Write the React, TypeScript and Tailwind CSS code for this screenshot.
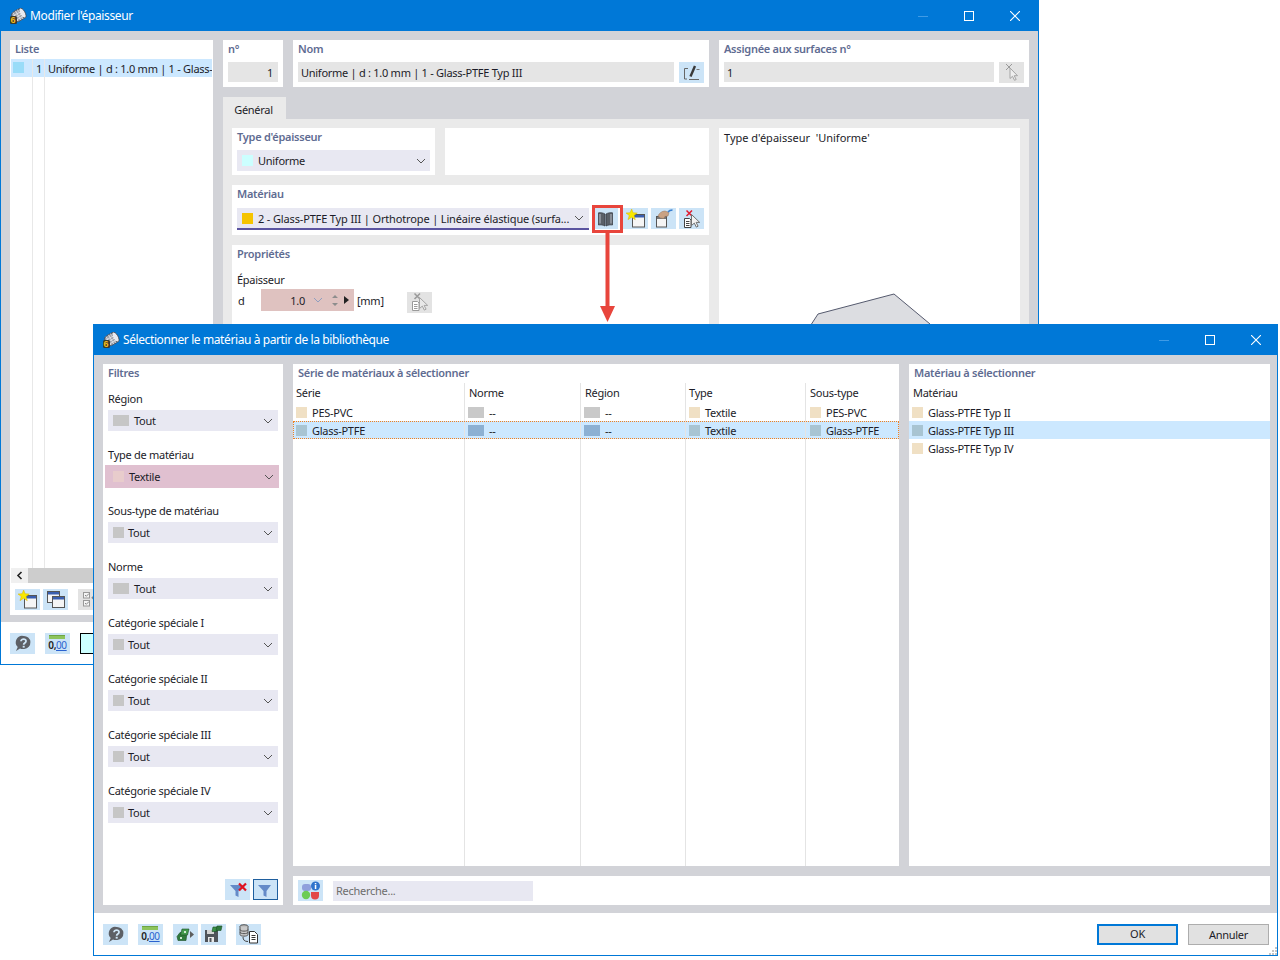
import React from "react";

const Chevron = ({ c = "#555" }: { c?: string }) => (
  <svg width="10" height="6" viewBox="0 0 10 6" className="shrink-0"><path d="M1 1l4 4 4-4" fill="none" stroke={c} strokeWidth="1" /></svg>
);

const AppIcon = () => (
  <svg width="18" height="16" viewBox="0 0 18 16" className="shrink-0">
    <g transform="rotate(-30 10 7)">
      <rect x="3" y="1.500" width="13" height="11" rx="4" fill="#9da2ac" stroke="#3d4048" strokeWidth="0.7" />
      <ellipse cx="14" cy="7" rx="2.600" ry="5.500" fill="#e8eaf0" stroke="#3d4048" strokeWidth="0.7" />
      <path d="M6 2v10M9 1.500v11M11.500 1.500v11M3 5h10M3 7.500h10M3 10h10" stroke="#f2f3f6" strokeWidth="0.6" />
    </g>
    <rect x="1" y="8" width="7" height="8" rx="1.500" fill="#3d3a2a" />
    <text x="1.500" y="15.300" fontSize="9" fontWeight="700" fill="#f5bd1c" fontFamily="Liberation Sans">6</text>
  </svg>
);

const HelpIcon = () => (
  <svg width="17" height="17" viewBox="0 0 17 17">
    <path d="M9.500 1a6.500 6.500 0 0 1 .8 13c-1.600.3-3.200 0-4.300-.5L2 16l1.700-4A6.500 6.500 0 0 1 9.500 1z" fill="#5d6066" />
    <path d="M7 6.300c0-2.900 5.300-2.900 5 0 0 1.900-2.300 1.700-2.300 3.400" fill="none" stroke="#cfe6f7" strokeWidth="1.800" />
    <rect x="8.700" y="10.800" width="2" height="1.800" fill="#cfe6f7" />
  </svg>
);

const DecIcon = () => (
  <div className="flex flex-col items-center leading-none">
    <div className="w-[16px] h-[4px] mt-[1px] bg-[#8dc45c] border-t border-[#6ea544]" />
    <div className="text-[10px] font-semibold leading-[13px] tracking-[-0.4px] text-[#222]">0,<span className="text-[#2a62cf] underline font-normal">00</span></div>
  </div>
);

const WinShape = ({ x, y, w, h, bar = "#3a5fb0" }: { x: number; y: number; w: number; h: number; bar?: string }) => (
  <g>
    <rect x={x + 0.5} y={y + 0.5} width={w} height={h} fill="#f5f5f5" stroke="#555" />
    <rect x={x + 1} y={y + 1} width={w - 1} height={2.500} fill={bar} />
  </g>
);

const Star = ({ x, y }: { x: number; y: number }) => (
  <path transform={`translate(${x} ${y}) scale(1.25)`} d="M4.500 0l1.200 3 3.300.2-2.600 2 1 3.300-2.900-1.900L1.600 8.500l1-3.300L0 3.200 3.300 3z" fill="#f8e800" stroke="#d8b400" strokeWidth="0.4" />
);

const NewWinIcon = () => (
  <svg width="21" height="19" viewBox="0 0 21 19">
    <WinShape x={7} y={5} w={12} h={12.500} />
    <Star x={1} y={0} />
  </svg>
);

const CopyWinIcon = () => (
  <svg width="21" height="19" viewBox="0 0 21 19">
    <WinShape x={2} y={1} w={12} h={11} />
    <WinShape x={7} y={6} w={12} h={11} />
  </svg>
);

const BookIcon = () => (
  <svg width="17" height="16" viewBox="0 0 17 16">
    <path d="M8 3C6 1.800 3.500 1.500 1.500 1.800V14c2-.4 4.500 0 6.500 1z" fill="#5a6068" stroke="#30343c" strokeWidth="0.7" />
    <path d="M9 3c2-1.200 4.500-1.500 6.500-1.200V14c-2-.4-4.500 0-6.500 1z" fill="#5a6068" stroke="#30343c" strokeWidth="0.7" />
    <path d="M3 3v9.500M14 3v9.500" stroke="#b8bec9" strokeWidth="1" />
  </svg>
);

const BoxHandIcon = () => (
  <svg width="21" height="19" viewBox="0 0 21 19">
    <rect x="3.500" y="7.500" width="10" height="10.500" fill="#f5f5f5" stroke="#555" />
    <rect x="4" y="8" width="9" height="2" fill="#777" />
    <path d="M5 7c1-3 4-5 7-5l4 1.500-1 3.500-3 .5-1.500 2-3-.5z" fill="#c9a284" stroke="#94745c" strokeWidth="0.5" />
    <path d="M15 3c1-1.300 2.500-2 4.500-2" fill="none" stroke="#3a7fd0" strokeWidth="1.600" />
  </svg>
);

const CursorDocIcon = ({ muted = false }: { muted?: boolean }) => (
  <svg width="21" height="20" viewBox="0 0 21 20">
    <path d="M3.500 9.500h5l1.500 1.500v7.500H3.500z" fill="#fff" stroke={muted ? "#9a9a9a" : "#444"} />
    <path d="M5 12.500h3.500M5 14.500h3.500M5 16.500h3.500" stroke={muted ? "#9a9a9a" : "#444"} />
    <path d="M5.500 1.500l5.500 5.500M11 1.500L5.500 7" stroke={muted ? "#9a9a9a" : "#e01b2f"} strokeWidth="1.500" />
    <path d="M10.500 5.500v11l2.800-2.400 2 4 1.800-.9-2-3.800h3.600z" fill={muted ? "#e8e8e8" : "#f2f2f2"} stroke={muted ? "#a5a5a5" : "#707070"} />
  </svg>
);

const CursorXIcon = () => (
  <svg width="16" height="19" viewBox="0 0 16 19">
    <path d="M2 1l6 6M8 1L2 7" stroke="#9a9a9a" strokeWidth="1" />
    <path d="M6 5v10.500l2.500-2.200 2 4 1.700-.8-2-3.800H13.500z" fill="#efefef" stroke="#a5a5a5" />
  </svg>
);

const EditIcon = () => (
  <svg width="17" height="16" viewBox="0 0 17 16">
    <path d="M5 3.500H1.500v10.500H4M6 14.500h10" fill="none" stroke="#666" />
    <path d="M12 1L7.500 11.500" stroke="#3a3a3a" strokeWidth="2.400" />
    <path d="M13.500 4.500h3" stroke="#777" />
  </svg>
);

const CheckListIcon = () => (
  <svg width="15" height="19" viewBox="0 0 15 19">
    <rect x="0.500" y="2.500" width="6" height="5.500" fill="#f5f5f5" stroke="#999" />
    <rect x="0.500" y="10.500" width="6" height="5.500" fill="#f5f5f5" stroke="#999" />
    <path d="M2 5l1.300 1.300L6 3.500M2 13l1.300 1.300L6 11.500" fill="none" stroke="#888" />
    <path d="M9 7l3 3 3-3" fill="none" stroke="#888" strokeWidth="2" />
  </svg>
);

const FunnelIcon = ({ x = false }: { x?: boolean }) => (
  <svg width="20" height="16" viewBox="0 0 20 16">
    <path d="M2 3h13L10.500 9v6l-3-1.500V9z" fill="#648ac8" />
    {x && <path d="M11 1.500l7 7M18 1.500l-7 7" stroke="#e01020" strokeWidth="2.200" />}
  </svg>
);

const ColorInfoIcon = () => (
  <svg width="20" height="20" viewBox="0 0 20 20">
    <rect x="1" y="3" width="9" height="7" rx="3" fill="#8f9fdc" />
    <circle cx="5" cy="14" r="4.200" fill="#6dcc55" />
    <path d="M10 11h8v3.500a4 4 0 0 1-8 0z" fill="#e34848" />
    <circle cx="14.500" cy="5" r="4.500" fill="#2f74cc" />
    <rect x="13.800" y="4" width="1.500" height="4" fill="#fff" />
    <rect x="13.800" y="2" width="1.500" height="1.300" fill="#fff" />
  </svg>
);

const GreenArrowIcon = () => (
  <svg width="19" height="15" viewBox="0 0 19 15">
    <path d="M1 9.500l3-4h7l-1 8H2z" fill="#2f7a3c" stroke="#1b4d25" strokeWidth="0.6" />
    <path d="M6 2h7l-1.500 6H4.500z" fill="#439a4e" stroke="#1b4d25" strokeWidth="0.6" />
    <path d="M4 10h2v2H4zM8 4h2v2H8z" fill="#cfe8d2" />
    <path d="M14 4l4 3.500-4 3.500z" fill="#5d5d5d" />
  </svg>
);

const SaveIcon = () => (
  <svg width="20" height="18" viewBox="0 0 20 18">
    <path d="M1 5h13v12H1z" fill="#50545a" />
    <rect x="3" y="5" width="7" height="4" fill="#d4d4d4" />
    <rect x="4" y="12" width="6" height="5" fill="#e8e8e8" />
    <rect x="5.500" y="13" width="2" height="4" fill="#50545a" />
    <path d="M9 2h5l-1 4.500H8z" fill="#3b9147" stroke="#1b4d25" strokeWidth="0.6" />
    <path d="M13 1h5l-1 4.500h-5z" fill="#2f7a3c" stroke="#1b4d25" strokeWidth="0.6" />
  </svg>
);

const DbDocIcon = () => (
  <svg width="21" height="20" viewBox="0 0 21 20">
    <ellipse cx="6" cy="2.500" rx="4" ry="1.800" fill="#b5b5b5" stroke="#555" />
    <path d="M2 2.500v8c0 2.200 8 2.200 8 0v-8M2 5.500c0 2.200 8 2.200 8 0M2 8c0 2.200 8 2.200 8 0" fill="#c9c9c9" stroke="#555" />
    <path d="M5 13c0 3 1.500 4.500 5 4.500" fill="none" stroke="#444" />
    <path d="M11.500 7.500h5l3 3v8.500h-8z" fill="#fff" stroke="#333" />
    <path d="M13.500 11.500h4M13.500 13.500h4M13.500 15.500h4" stroke="#333" />
  </svg>
);

const Btn = ({ children, muted = false, extra = "" }: { children?: React.ReactNode; muted?: boolean; extra?: string }) => (
  <div className={`w-[25px] h-[21px] shrink-0 flex items-center justify-center ${muted ? "bg-[#e3e3e3]" : "bg-[#cce4f7]"} ${extra}`}>{children}</div>
);

const Title = ({ children }: { children: React.ReactNode }) => (
  <div className="h-[19px] px-[5px] flex items-center font-semibold text-[#5f6c92] whitespace-nowrap">{children}</div>
);

const WindowControls = () => (
  <div className="ml-auto flex items-center gap-[36px]">
    <div className="w-[10px] h-px bg-[#3f9be6]" />
    <div className="w-[10px] h-[10px] border border-white" />
    <svg width="10" height="10" viewBox="0 0 10 10"><path d="M0 0l10 10M10 0L0 10" stroke="#fff" strokeWidth="1.100" /></svg>
  </div>
);

const Swatch = ({ c, wide = false }: { c: string; wide?: boolean }) => (
  <span className={`inline-block h-[11px] shrink-0 ${wide ? "w-[16px] mr-[5px]" : "w-[11px] mr-[4px]"}`} style={{ backgroundColor: c }} />
);

const filters: { label: string; value: string; wide?: boolean }[] = [
  { label: "Région", value: "Tout", wide: true },
  { label: "Type de matériau", value: "Textile" },
  { label: "Sous-type de matériau", value: "Tout" },
  { label: "Norme", value: "Tout", wide: true },
  { label: "Catégorie spéciale I", value: "Tout" },
  { label: "Catégorie spéciale II", value: "Tout" },
  { label: "Catégorie spéciale III", value: "Tout" },
  { label: "Catégorie spéciale IV", value: "Tout" },
];

const COLS = "grid grid-cols-[172px_116px_105px_120px_93px]";
const CELL = "border-r border-[#e4e4e4] pl-[3px] flex items-center";

const Cell = ({ c, text, wide, last }: { c: string; text: string; wide?: boolean; last?: boolean }) => (
  <div className={last ? "pl-[4px] flex items-center" : CELL}>
    <Swatch c={c} wide={wide} />
    <span className={`pt-[2px] ${wide ? "" : "pl-px"}`}>{text}</span>
  </div>
);

export default function App() {
  return (
    <div className="relative w-[1280px] h-[960px] bg-white overflow-hidden font-['Noto_Sans',sans-serif] text-[11px] tracking-[-0.27px] text-[#1c1c28]">
      {/* Window 1 */}
      <div className="absolute left-0 top-0 w-[1039px] h-[665px] border border-[#0078d7] flex flex-col overflow-hidden box-border">
        <div className="h-[30px] shrink-0 bg-[#0078d7] text-white text-[12px] tracking-[-0.38px] flex items-center pl-[8px] pr-[18px]">
          <AppIcon />
          <span className="ml-[3px]">Modifier l'épaisseur</span>
          <WindowControls />
        </div>
        <div className="h-[591px] shrink-0 bg-[#d2d3d8] flex gap-[10px] pl-[9px] pt-[9px] pb-[7px]">
          <div className="w-[203px] bg-white flex flex-col">
            <Title>Liste</Title>
            <div className="flex-1 flex flex-col px-px min-h-0">
              <div className="grid grid-cols-[22px_12px_1fr] h-[18px] bg-[#cce8ff]">
                <div className="border-r border-[#e8e8e8] pl-[2px] pt-[3px]"><div className="w-[11px] h-[11px] bg-[#99dcf8]" /></div>
                <div className="border-r border-[#e8e8e8] flex items-center pl-[3px] pt-[2px]">1</div>
                <div className="pl-[3px] pt-[2px] flex items-center overflow-hidden whitespace-nowrap">Uniforme | d : 1.0 mm | 1 - Glass-</div>
              </div>
              <div className="grid grid-cols-[22px_12px_1fr] flex-1">
                <div className="border-r border-[#e8e8e8]" />
                <div className="border-r border-[#e8e8e8]" />
                <div />
              </div>
            </div>
            <div className="h-[15px] mx-px flex bg-[#cdcdcd]">
              <div className="w-[17px] bg-[#f0f0f0] flex items-center justify-center">
                <svg width="7" height="9" viewBox="0 0 7 9"><path d="M5.500 1L2 4.500 5.500 8" fill="none" stroke="#222" strokeWidth="1.600" /></svg>
              </div>
            </div>
            <div className="h-[32px] flex items-start pt-[6px] pl-[5px]">
              <Btn><NewWinIcon /></Btn>
              <Btn extra="ml-[3px]"><CopyWinIcon /></Btn>
              <Btn muted extra="ml-[10px]"><CheckListIcon /></Btn>
            </div>
          </div>

          <div className="w-[806px] flex flex-col">
            <div className="flex gap-[10px] h-[47px] shrink-0">
              <div className="w-[60px] bg-white">
                <Title>n°</Title>
                <div className="mx-[5px] mt-[3px] h-[20px] bg-[#e5e5e5] flex items-center justify-end pr-[5px] pt-[2px]">1</div>
              </div>
              <div className="w-[416px] bg-white">
                <Title>Nom</Title>
                <div className="flex mx-[5px] mt-[3px]">
                  <div className="w-[376px] h-[20px] bg-[#e5e5e5] flex items-center pl-[3px] pt-[2px]">Uniforme | d : 1.0 mm | 1 - Glass-PTFE Typ III</div>
                  <Btn extra="ml-[5px]"><EditIcon /></Btn>
                </div>
              </div>
              <div className="w-[310px] bg-white">
                <Title>Assignée aux surfaces n°</Title>
                <div className="flex mx-[5px] mt-[3px]">
                  <div className="w-[270px] h-[20px] bg-[#e5e5e5] flex items-center pl-[3px] pt-[2px]">1</div>
                  <Btn muted extra="ml-[5px]"><CursorXIcon /></Btn>
                </div>
              </div>
            </div>
            <div className="mt-[10px] w-[63px] h-[22px] pt-[4px] pr-[2px] shrink-0 bg-[#eaeaea] flex items-center justify-center">Général</div>
            <div className="flex-1 bg-[#eaeaea] p-[9px] flex gap-[10px] min-h-0">
              <div className="w-[477px] flex flex-col">
                <div className="flex gap-[10px] h-[47px] shrink-0">
                  <div className="w-[203px] bg-white">
                    <Title>Type d'épaisseur</Title>
                    <div className="mx-[5px] mt-[3px] h-[21px] bg-[#e8e8f2] flex items-center pl-[5px] pr-[4px]">
                      <span className="w-[11px] h-[11px] bg-[#ccffff] mr-[5px]" />
                      <span className="pt-[2px]">Uniforme</span>
                      <span className="ml-auto"><Chevron /></span>
                    </div>
                  </div>
                  <div className="w-[264px] bg-white" />
                </div>
                <div className="mt-[10px] h-[50px] shrink-0 bg-white">
                  <Title>Matériau</Title>
                  <div className="flex mx-[5px] mt-[4px]">
                    <div className="w-[353px] h-[22px] bg-[#e8e8f2] border-b-2 border-[#5b54a0] flex items-center pl-[5px] pr-[5px] whitespace-nowrap overflow-hidden">
                      <span className="w-[11px] h-[11px] bg-[#f5c400] mr-[5px] shrink-0" />
                      <span className="pt-[2px] tracking-[-0.15px]">2 - Glass-PTFE Typ III | Orthotrope | Linéaire élastique (surfa...</span>
                      <span className="ml-auto"><Chevron /></span>
                    </div>
                    <Btn extra="ml-[4px]"><BookIcon /></Btn>
                    <Btn extra="ml-[5px]"><NewWinIcon /></Btn>
                    <Btn extra="ml-[3px]"><BoxHandIcon /></Btn>
                    <Btn extra="ml-[3px]"><CursorDocIcon /></Btn>
                  </div>
                </div>
                <div className="mt-[10px] flex-1 bg-white">
                  <Title>Propriétés</Title>
                  <div className="pl-[5px] pt-[8px]">
                    <div className="h-[17px] flex items-center">Épaisseur</div>
                    <div className="h-[22px] flex items-center">
                      <span className="w-[24px] pl-px pt-[2px]">d</span>
                      <div className="w-[93px] h-[22px] bg-[#dfc2c0] flex items-center">
                        <span className="w-[44px] text-right pt-[2px]">1.0</span>
                        <span className="ml-[8px]"><Chevron c="#8f9fc0" /></span>
                        <svg width="8" height="13" viewBox="0 0 8 13" className="ml-[8px]"><path d="M4 1l3 3H1zM4 12l3-3H1z" fill="#8d8d8d" /></svg>
                        <svg width="5" height="8" viewBox="0 0 5 8" className="ml-[5px]"><path d="M0 0l5 4-5 4z" fill="#222" /></svg>
                      </div>
                      <span className="ml-[3px] w-[50px] pt-[2px]">[mm]</span>
                      <Btn muted extra="mt-[4px]"><CursorDocIcon muted /></Btn>
                    </div>
                  </div>
                </div>
              </div>
              <div className="w-[301px] bg-white relative">
                <div className="pl-[5px] pt-[2px] h-[19px] whitespace-pre tracking-normal">Type d'épaisseur  'Uniforme'</div>
                <svg width="301" height="196" viewBox="0 0 301 196" className="absolute left-0 top-0">
                  <path d="M92.500 196L99 186l76-20 36 30" fill="#dcdde1" stroke="#555a6e" strokeWidth="1" />
                </svg>
              </div>
            </div>
          </div>
        </div>
        <div className="flex-1 bg-white flex items-center gap-[10px] pl-[9px]">
          <Btn><HelpIcon /></Btn>
          <Btn><DecIcon /></Btn>
          <div className="w-[26px] h-[21px] bg-[#ccffff] border border-black shrink-0" />
        </div>
      </div>

      {/* Window 2 */}
      <div className="absolute left-[93px] top-[324px] w-[1185px] h-[632px] border border-[#0078d7] box-border flex flex-col bg-white">
        <div className="h-[30px] shrink-0 bg-[#0078d7] text-white text-[12px] tracking-[-0.4px] flex items-center pl-[8px] pr-[16px]">
          <AppIcon />
          <span className="ml-[3px]">Sélectionner le matériau à partir de la bibliothèque</span>
          <WindowControls />
        </div>
        <div className="h-[558px] shrink-0 bg-[#d2d3d8] pl-[9px] pr-[7px] pt-[9px] pb-[8px] flex gap-[10px]">
          <div className="w-[180px] bg-white flex flex-col">
            <Title>Filtres</Title>
            <div className="mt-[8px] px-[5px]">
              {filters.map((f) => (
                <div key={f.label} className="h-[56px]">
                  <div className="h-[19px] pb-[2px] flex items-center whitespace-nowrap">{f.label}</div>
                  {f.value === "Textile" ? (
                    <div className="h-[23px] -ml-[3px] -mr-[1px] -mt-[1px] bg-[#e0c0d0] flex items-center pl-[8px] pr-[5px]">
                      <Swatch c="#e8cccc" />
                      <span className="pl-px pt-[2px]">{f.value}</span>
                      <span className="ml-auto"><Chevron /></span>
                    </div>
                  ) : (
                    <div className="h-[21px] bg-[#e8e8f2] flex items-center pl-[5px] pr-[5px]">
                      <Swatch c="#c6c6c6" wide={f.wide} />
                      <span className="pt-[2px]">{f.value}</span>
                      <span className="ml-auto"><Chevron /></span>
                    </div>
                  )}
                </div>
              ))}
            </div>
            <div className="mt-auto flex justify-end gap-[3px] pr-[5px] pb-[5px]">
              <Btn><FunnelIcon x /></Btn>
              <Btn extra="border border-[#1f5f9e]"><FunnelIcon /></Btn>
            </div>
          </div>

          <div className="flex-1 flex flex-col gap-[10px] min-w-0">
            <div className="flex-1 flex gap-[10px] min-h-0">
              <div className="w-[606px] bg-white flex flex-col">
                <Title>Série de matériaux à sélectionner</Title>
                <div className={`${COLS} h-[20px] shrink-0`}>
                  {["Série", "Norme", "Région", "Type", "Sous-type"].map((h, i) => (
                    <div key={h} className={i === 4 ? "pl-[4px] flex items-center" : i === 1 || i === 2 ? "border-r border-[#e4e4e4] pl-[4px] flex items-center" : CELL}>{h}</div>
                  ))}
                </div>
                <div className={`${COLS} h-[18px] shrink-0`}>
                  <Cell c="#f0e0c4" text="PES-PVC" wide={false} />
                  <Cell c="#c9c9c9" text="--" wide />
                  <Cell c="#c9c9c9" text="--" wide />
                  <Cell c="#f0e0c4" text="Textile" />
                  <Cell c="#f0e0c4" text="PES-PVC" last />
                </div>
                <div className={`${COLS} h-[18px] shrink-0 bg-[#cce8ff] outline-1 outline-dotted outline-[#f08020] -outline-offset-1`}>
                  <Cell c="#a8c4d2" text="Glass-PTFE" />
                  <Cell c="#8cb0d2" text="--" wide />
                  <Cell c="#8cb0d2" text="--" wide />
                  <Cell c="#a8c4d2" text="Textile" />
                  <Cell c="#a8c4d2" text="Glass-PTFE" last />
                </div>
                <div className={`${COLS} flex-1`}>
                  <div className={CELL} />
                  <div className={CELL} />
                  <div className={CELL} />
                  <div className={CELL} />
                  <div />
                </div>
              </div>
              <div className="flex-1 bg-white flex flex-col">
                <Title>Matériau à sélectionner</Title>
                <div className="h-[20px] flex items-center pl-[4px]">Matériau</div>
                {[
                  ["Glass-PTFE Typ II", "#f0e0c4", ""],
                  ["Glass-PTFE Typ III", "#a8c4d2", "bg-[#cce8ff]"],
                  ["Glass-PTFE Typ IV", "#f0e0c4", ""],
                ].map(([t, c, bg]) => (
                  <div key={t} className={`h-[18px] flex items-center pl-[3px] ${bg}`}>
                    <Swatch c={c} />
                    <span className="pl-px pt-[2px]">{t}</span>
                  </div>
                ))}
              </div>
            </div>
            <div className="h-[29px] shrink-0 bg-white flex items-center pl-[5px]">
              <Btn><ColorInfoIcon /></Btn>
              <div className="ml-[10px] w-[200px] h-[20px] bg-[#e8e8f2] flex items-center pl-[3px] pt-[2px] text-[#6d6d6d]">Recherche...</div>
            </div>
          </div>
        </div>
        <div className="flex-1 relative flex items-center pl-[9px] pr-[8px]">
          <Btn><HelpIcon /></Btn>
          <Btn extra="ml-[10px]"><DecIcon /></Btn>
          <Btn extra="ml-[10px]"><GreenArrowIcon /></Btn>
          <Btn extra="ml-[3px]"><SaveIcon /></Btn>
          <Btn extra="ml-[10px]"><DbDocIcon /></Btn>
          <div className="ml-auto w-[81px] h-[21px] bg-[#e1e1e1] border-2 border-[#0078d7] flex items-center justify-center pt-[1px]">OK</div>
          <div className="ml-[10px] w-[81px] h-[21px] bg-[#e1e1e1] border border-[#adadad] flex items-center justify-center pt-[2px]">Annuler</div>
          <svg width="8" height="8" viewBox="0 0 8 8" className="absolute right-0 bottom-0">
            <path d="M6 0h2v2H6zM3 3h2v2H3zM6 3h2v2H6zM0 6h2v2H0zM3 6h2v2H3zM6 6h2v2H6z" fill="#c4c4c4" />
          </svg>
        </div>
      </div>

      {/* Annotation over both windows */}
      <svg width="40" height="125" viewBox="0 0 40 125" className="absolute left-[587px] top-[200px]">
        <rect x="6.500" y="6.500" width="28" height="25" fill="none" stroke="#e8453c" strokeWidth="3" />
        <rect x="18.500" y="33" width="4" height="75" fill="#e8453c" />
        <path d="M13 106h15l-7.500 16z" fill="#e8453c" />
      </svg>
    </div>
  );
}
